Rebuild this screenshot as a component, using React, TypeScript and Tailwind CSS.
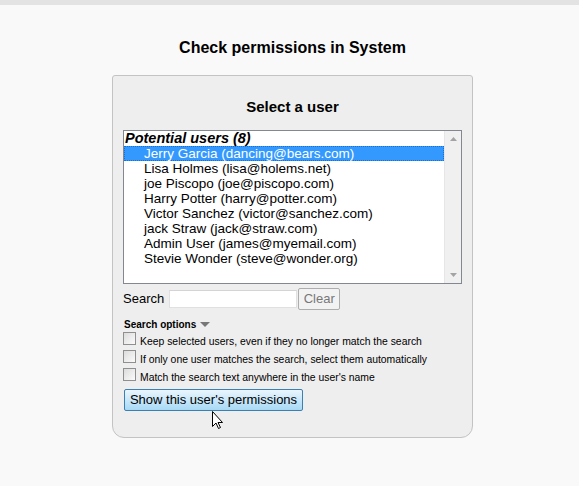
import React from "react";

const users = [
  "Jerry Garcia (dancing@bears.com)",
  "Lisa Holmes (lisa@holems.net)",
  "joe Piscopo (joe@piscopo.com)",
  "Harry Potter (harry@potter.com)",
  "Victor Sanchez (victor@sanchez.com)",
  "jack Straw (jack@straw.com)",
  "Admin User (james@myemail.com)",
  "Stevie Wonder (steve@wonder.org)",
];

const options = [
  "Keep selected users, even if they no longer match the search",
  "If only one user matches the search, select them automatically",
  "Match the search text anywhere in the user's name",
];

function Checkbox() {
  return (
    <div className="w-[13px] h-[13px] border border-[#8f8f8f] bg-gradient-to-br from-[#dcdcdc] to-[#fbfbfb] shrink-0" />
  );
}

export default function App() {
  return (
    <div
      className="w-[579px] h-[486px] bg-[#f9f9f9] text-black overflow-hidden"
      style={{ fontFamily: '"Liberation Sans", Arial, sans-serif' }}
    >
      <div className="h-[5px] bg-[#e3e3e3]" />
      <div className="ml-[112px] w-[361px]">
        <div className="pt-[33px] h-[70px] text-center text-[16px] font-bold leading-[19px]">
          Check permissions in System
        </div>
        <div className="relative h-[363px] bg-[#eeeeee] border border-[#c3c3c3] rounded-t-[3px] rounded-b-[12px] px-[10px]">
          <div className="pt-[22px] h-[54px] text-center text-[15px] font-bold leading-[18px]">
            Select a user
          </div>
          <div className="flex h-[154px] w-[339px] border border-[#828790] bg-white">
            <div className="flex-1 text-[13.5px] leading-[15px]">
              <div className="pl-[1px] font-bold italic text-[14.5px]">Potential users (8)</div>
              {users.map((u, i) =>
                i === 0 ? (
                  <div
                    key={u}
                    className="pl-[19px] bg-[#3399ff] text-white border border-dotted border-[#1a6fd0] h-[15px] leading-[13px]"
                  >
                    {u}
                  </div>
                ) : (
                  <div key={u} className="pl-[20px]">
                    {u}
                  </div>
                )
              )}
            </div>
            <div className="w-[17px] bg-[#f0f0f0] border-l border-[#e6e6e6] flex flex-col justify-between items-center py-[6px]">
              <svg width="7" height="4" viewBox="0 0 7 4">
                <polygon points="0,4 7,4 3.5,0" fill="#a3a3a3" />
              </svg>
              <svg width="7" height="4" viewBox="0 0 7 4">
                <polygon points="0,0 7,0 3.5,4" fill="#a3a3a3" />
              </svg>
            </div>
          </div>
          <div className="flex items-center mt-[4px] h-[22px] text-[13px]">
            <span className="mr-[5px]">Search</span>
            <div className="w-[128px] h-[18px] bg-white border border-[#e0e0e0] border-t-[#d4d4d4]" />
            <div className="ml-[1px] w-[42px] h-[22px] border border-[#adadad] rounded-[2px] bg-[#f2f2f2] text-[#777777] flex items-center justify-center text-[13px]">
              Clear
            </div>
          </div>
          <div className="flex items-center mt-[9px] h-[11px] text-[10px] font-bold leading-[11px] pl-[1px]">
            Search options
            <svg className="ml-[4px]" width="10" height="6" viewBox="0 0 10 6">
              <polygon points="0,0 10,0 5,5" fill="#777777" />
            </svg>
          </div>
          <div className="mt-[2px] flex flex-col gap-[5px] text-[10.4px] leading-[13px]">
            {options.map((o) => (
              <div key={o} className="flex items-end">
                <Checkbox />
                <span className="ml-[4px] translate-y-[3px]">{o}</span>
              </div>
            ))}
          </div>
          <div className="mt-[8px] ml-[1px] w-[179px] h-[22px] border border-[#3c7fb1] rounded-[2px] bg-gradient-to-b from-[#eaf6fd] to-[#a7d9f5] flex items-center justify-center text-[13px]">
            Show this user's permissions
          </div>
          <svg
            className="absolute left-[99px] top-[335px]"
            width="12"
            height="19"
            viewBox="0 0 12 19"
          >
            <path
              d="M0.5 0.5 L0.5 15.5 L4 12 L6.5 17.5 L8.5 16.5 L6 11.5 L10.5 11.5 Z"
              fill="#ffffff"
              stroke="#000000"
              strokeWidth="1"
              strokeLinejoin="miter"
            />
          </svg>
        </div>
      </div>
    </div>
  );
}
